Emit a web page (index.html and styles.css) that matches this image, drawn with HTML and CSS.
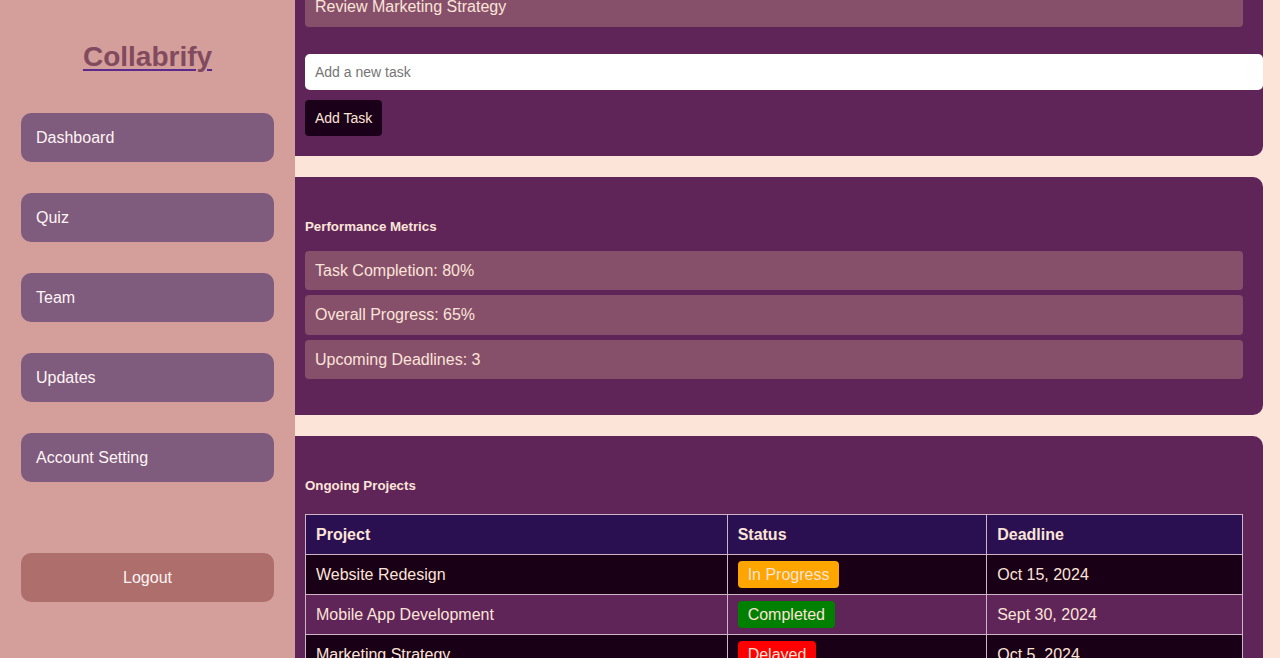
FILE: index.html
```html
<!DOCTYPE html>
<html lang="en">
<head>
<meta charset="utf-8">
<title>Collabrify</title>
<link rel="stylesheet" href="styles.css">
</head>
<body>
<div class="layout">
  <aside class="sidebar">
    <h1 class="logo"><a href="#" class="logo-link"><span class="logo-text">Collabrify</span></a></h1>
    <nav class="nav">
      <a href="#" class="nav-btn">Dashboard</a>
      <a href="#" class="nav-btn">Quiz</a>
      <a href="#" class="nav-btn">Team</a>
      <a href="#" class="nav-btn">Updates</a>
      <a href="#" class="nav-btn">Account Setting</a>
    </nav>
    <a href="#" class="logout-btn">Logout</a>
  </aside>
  <main class="main" id="main">
    <section class="card">
      <h5 class="card-title">Task List</h5>
      <ul class="item-list">
        <li class="item">Complete Project Proposal</li>
        <li class="item">Team Meeting at 3 PM</li>
        <li class="item" id="scroll-anchor">Review Marketing Strategy</li>
      </ul>
      <input class="task-input" type="text" placeholder="Add a new task">
      <button class="add-btn">Add Task</button>
    </section>
    <section class="card">
      <h5 class="card-title">Performance Metrics</h5>
      <ul class="item-list metrics">
        <li class="item">Task Completion: 80%</li>
        <li class="item">Overall Progress: 65%</li>
        <li class="item">Upcoming Deadlines: 3</li>
      </ul>
    </section>
    <section class="card">
      <h5 class="card-title projects-title">Ongoing Projects</h5>
      <table class="projects">
        <thead>
          <tr><th class="col-project">Project</th><th class="col-status">Status</th><th>Deadline</th></tr>
        </thead>
        <tbody>
          <tr><td>Website Redesign</td><td><span class="badge progress">In Progress</span></td><td>Oct 15, 2024</td></tr>
          <tr><td>Mobile App Development</td><td><span class="badge done">Completed</span></td><td>Sept 30, 2024</td></tr>
          <tr><td>Marketing Strategy</td><td><span class="badge delayed">Delayed</span></td><td>Oct 5, 2024</td></tr>
          <tr><td>Client Onboarding Portal</td><td><span class="badge progress">In Progress</span></td><td>Nov 20, 2024</td></tr>
        </tbody>
      </table>
    </section>
  </main>
</div>
<script src="script.js"></script>
</body>
</html>
```

FILE: styles.css
```css
body {
  margin: 0;
  font-family: "Liberation Sans", Arial, sans-serif;
  background: #fce4d8;
  color: #fce4d8;
}
.layout {
  display: flex;
  height: 100vh;
  overflow: hidden;
}
.sidebar {
  flex: 0 0 295px;
  width: 295px;
  box-sizing: border-box;
  background: #d49f9a;
  padding: 0 21px;
  display: flex;
  flex-direction: column;
}
.logo {
  margin: 40px 0 0;
  text-align: center;
  font-size: 28px;
  font-weight: bold;
  line-height: 34px;
}
.logo-link {
  text-decoration: underline;
  text-decoration-color: #5b2a8c;
  text-decoration-thickness: 2px;
  text-underline-offset: 3px;
}
.logo-text {
  color: #824a5e;
}
.nav {
  display: flex;
  flex-direction: column;
  gap: 31px;
  margin-top: 39px;
}
.nav-btn,
.logout-btn {
  display: block;
  height: 49px;
  line-height: 49px;
  border-radius: 10px;
  background: #7f5b7d;
  color: #fff5f5;
  text-decoration: none;
  font-size: 16px;
  padding-left: 15px;
}
.logout-btn {
  margin-top: 71px;
  background: #ad6e6c;
  padding-left: 0;
  text-align: center;
}
.main {
  flex: 1;
  height: 100vh;
  overflow-y: auto;
  scrollbar-width: none;
  box-sizing: border-box;
  padding: 0 17px 20px 0;
  display: flex;
  flex-direction: column;
  gap: 21px;
}
.main::-webkit-scrollbar {
  display: none;
}
.card {
  flex: 0 0 auto;
  background: #5f2559;
  border-radius: 0 10px 10px 0;
  padding: 42px 20px 20px 10px;
}
.card-title {
  margin: 0 0 16px;
  font-size: 13.3px;
  font-weight: bold;
  line-height: 16px;
  color: #fce4d8;
}
.projects-title {
  margin-bottom: 20px;
}
.item-list {
  list-style: none;
  margin: 0;
  padding: 0;
  display: flex;
  flex-direction: column;
  gap: 5px;
}
.metrics {
  margin-bottom: 16px;
}
.item {
  background: #86506b;
  border-radius: 4px;
  height: 39.5px;
  line-height: 39.5px;
  padding-left: 10px;
  font-size: 16px;
  color: #fce4d8;
}
.task-input {
  display: block;
  width: 100%;
  height: 16px;
  margin: 27px 0 10px;
  padding: 10px;
  border: none;
  border-radius: 5px;
  background: #ffffff;
  font-family: "Liberation Sans", Arial, sans-serif;
  font-size: 14px;
  color: #333;
}
.task-input::placeholder {
  color: #757575;
}
.add-btn {
  display: block;
  height: 36px;
  padding: 0 10px;
  border: none;
  border-radius: 4px;
  background: #1a0018;
  color: #fce4d8;
  font-family: "Liberation Sans", Arial, sans-serif;
  font-size: 14px;
}
.projects {
  width: 100%;
  border-collapse: collapse;
  font-size: 16px;
}
.projects th,
.projects td {
  border: 1px solid #cfb3c6;
  padding: 10px;
  text-align: left;
  line-height: 19px;
  color: #fce4d8;
}
.projects th {
  background: #2a1050;
  font-weight: bold;
}
.col-project {
  width: 45%;
}
.col-status {
  width: 27.7%;
}
.projects tbody tr:nth-child(odd) td {
  background: #1a0016;
}
.projects tbody tr:nth-child(even) td {
  background: #5f2559;
}
.badge {
  padding: 5px 10px;
  border-radius: 4px;
}
.badge.progress {
  background: #ffa500;
}
.badge.done {
  background: #008000;
}
.badge.delayed {
  background: #ff0000;
}
```

FILE: script.js
```js
(function () {
  var main = document.getElementById('main');
  var anchor = document.getElementById('scroll-anchor');
  if (!main || !anchor) return;
  var mainTop = main.getBoundingClientRect().top;
  var bottom = anchor.getBoundingClientRect().bottom - mainTop + main.scrollTop;
  main.scrollTop = bottom - 27;
})();
```
